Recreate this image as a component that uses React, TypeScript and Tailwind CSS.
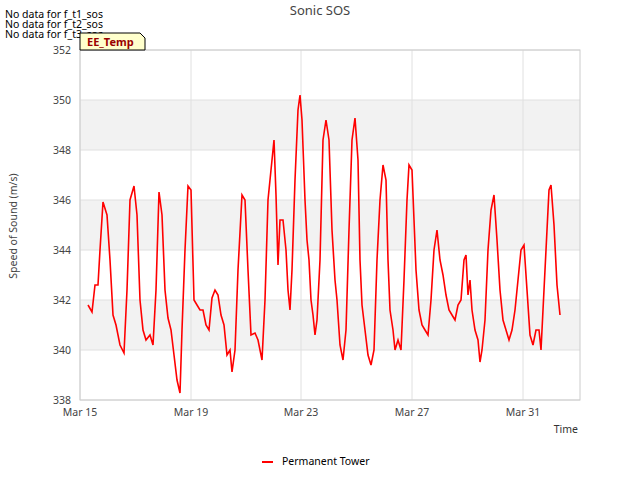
const pts: [number, number][] = [[88,305],[92,312],[95,285],[98,285],[100,250],[103,202],[107,215],[110,260],[113,315],[116,325],[120,345],[124,353],[127,290],[130,200],[134,186],[137,215],[140,300],[143,330],[146,340],[150,335],[153,345],[156,290],[159,192],[162,215],[165,290],[168,318],[171,330],[174,355],[177,380],[180,393],[182,330],[185,250],[188,186],[191,190],[194,300],[197,305],[200,310],[203,310],[206,325],[209,330],[212,298],[215,290],[218,295],[221,315],[224,325],[227,355],[230,350],[232,372],[235,350],[238,270],[242,195],[245,200],[248,270],[251,335],[255,333],[258,340],[262,360],[265,300],[268,200],[272,160],[274,140],[276,195],[278,265],[280,220],[283,220],[286,250],[288,290],[290,310],[292,270],[295,180],[298,110],[300,95],[302,120],[305,200],[307,240],[309,260],[311,300],[313,315],[315,335],[317,320],[320,260],[323,140],[326,120],[329,140],[332,230],[335,280],[337,300],[340,345],[343,360],[346,330],[349,230],[352,140],[355,118],[358,160],[360,260],[362,305],[365,330],[368,355],[371,365],[374,350],[377,260],[380,200],[383,165],[386,180],[388,260],[390,310],[393,330],[395,350],[398,340],[401,350],[404,280],[407,200],[409,165],[412,170],[414,220],[416,270],[419,310],[422,325],[425,330],[428,335],[431,300],[434,250],[437,230],[440,260],[443,275],[446,295],[449,310],[452,315],[455,320],[458,305],[461,300],[464,260],[466,255],[468,295],[470,280],[472,310],[475,330],[478,340],[480,362],[482,350],[485,320],[488,250],[491,210],[494,195],[497,240],[500,290],[503,320],[506,330],[509,340],[512,330],[515,310],[518,280],[521,250],[524,245],[527,290],[530,335],[533,345],[536,330],[539,330],[541,350],[543,310],[546,250],[549,190],[551,185],[554,225],[557,285],[560,315]];

export default function App() {
  const yt = [338,340,342,344,346,348,350,352];
  const xt: [number,string][] = [[80,"Mar 15"],[191,"Mar 19"],[301,"Mar 23"],[412,"Mar 27"],[523,"Mar 31"]];
  return (
    <div className="w-[640px] h-[480px] bg-white font-['DejaVu_Sans',sans-serif]">
      <svg width="640" height="480">
        {[300,200,100].map(y => <rect key={y} x="80" y={y} width="500" height="50" fill="#f2f2f2" />)}
        {yt.map((v,i) => <line key={v} x1="80" x2="580" y1={400-i*50} y2={400-i*50} stroke="#e0e0e0" />)}
        {xt.map(([x]) => <line key={x} x1={x} x2={x} y1="50" y2="400" stroke="#e0e0e0" />)}
        <rect x="80" y="50" width="500" height="350" fill="none" stroke="#ccc" />
        {yt.map((v,i) => <text key={v} x="71" y={404-i*50} fontSize="10.5" fill="#444" textAnchor="end">{v}</text>)}
        {xt.map(([x,l]) => <text key={l} x={x} y="416" fontSize="10.5" fill="#444" textAnchor="middle">{l}</text>)}
        <text x="320" y="15" fontSize="13" fill="#444" textAnchor="middle">Sonic SOS</text>
        <text x="578" y="433" fontSize="10.5" fill="#333" textAnchor="end">Time</text>
        <text transform="translate(17,226) rotate(-90)" fontSize="10.5" fill="#444" textAnchor="middle">Speed of Sound (m/s)</text>
        <polyline points={pts.map(p => p.join(",")).join(" ")} fill="none" stroke="#ff0000" strokeWidth="1.6" />
        <text x="5" y="18" fontSize="10.5" fill="#000">No data for f_t1_sos</text>
        <text x="5" y="28" fontSize="10.5" fill="#000">No data for f_t2_sos</text>
        <text x="5" y="38" fontSize="10.5" fill="#000">No data for f_t3_sos</text>
        <path d="M80,33 L140,33 L145,38 L145,50 L80,50 Z" fill="#ffffcc" stroke="#000" strokeWidth="1" />
        <text x="87" y="46" fontSize="11" fontWeight="bold" fill="#990000">EE_Temp</text>
        <line x1="262" x2="273" y1="462" y2="462" stroke="#ff0000" strokeWidth="2" />
        <text x="282" y="465" fontSize="10.5" fill="#000">Permanent Tower</text>
      </svg>
    </div>
  );
}
